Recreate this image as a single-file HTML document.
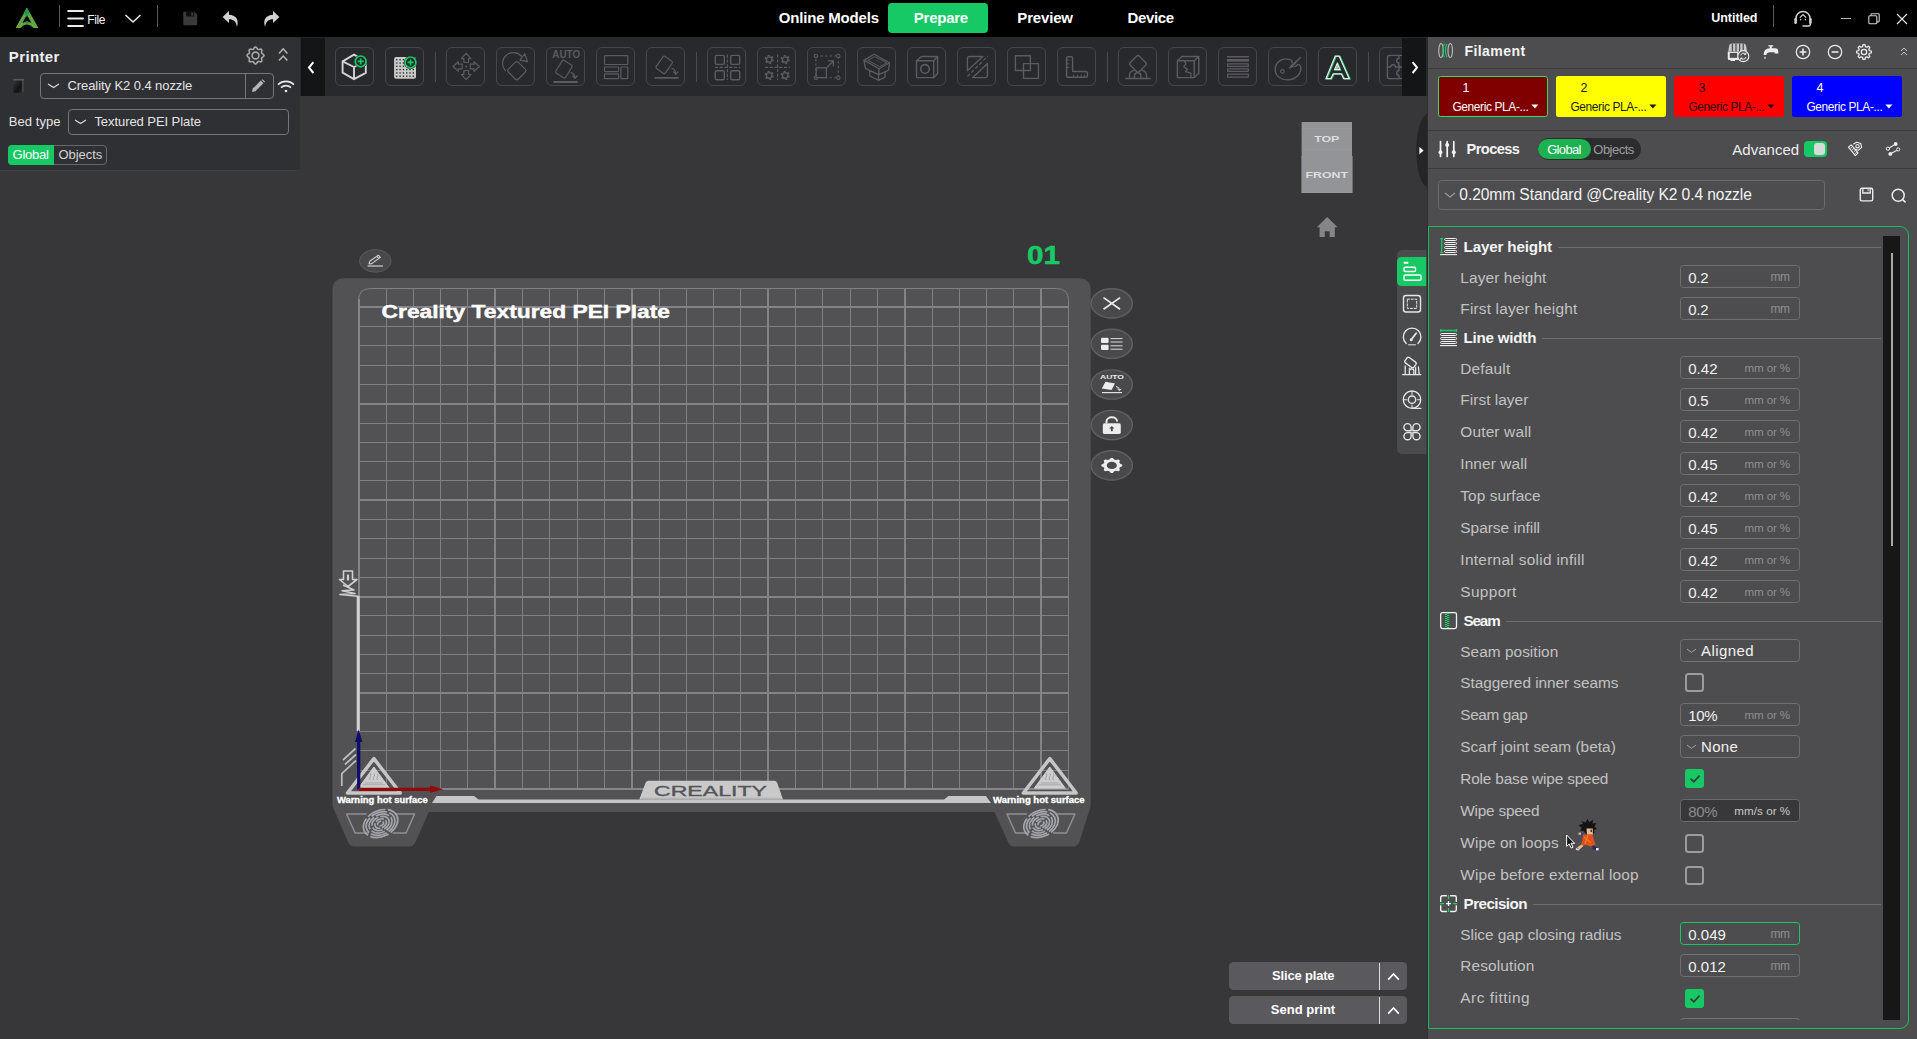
<!DOCTYPE html>
<html><head><meta charset="utf-8"><title>Creality Print</title>
<style>
html,body{margin:0;padding:0}
body{width:1917px;height:1039px;overflow:hidden;background:#373739;position:relative;font-family:"Liberation Sans",sans-serif}
.b{position:absolute;display:block}
.t{position:absolute;line-height:1;white-space:nowrap;display:block}
.tb{width:39px;height:39px;box-sizing:border-box;border:1px solid #45464b;border-radius:6px}
svg{overflow:visible}
svg text{font-family:"Liberation Sans",sans-serif}
</style></head>
<body>
<!-- viewport -->
<svg class="b" style="left:0;top:0" width="1917" height="1039" viewBox="0 0 1917 1039" font-family="Liberation Sans, sans-serif"><path d="M344.5 278.3 H1078.7 Q1090.7 278.3 1090.7 290.3 V806 L1079.5 841.5 Q1078 846.5 1072.5 846.5 H1014.5 Q1010 846.5 1008 842 L994.5 812 H428.8 L415.5 842 Q413.5 846.5 409 846.5 H354.5 Q350 846.5 348 842 L332.5 806 V290.3 Q332.5 278.3 344.5 278.3 Z" fill="#525254"/>
<path d="M386.5 288.10 V789.40 M413.5 288.10 V789.40 M440.5 288.10 V789.40 M467.5 288.10 V789.40 M522.5 288.10 V789.40 M549.5 288.10 V789.40 M577.5 288.10 V789.40 M604.5 288.10 V789.40 M659.5 288.10 V789.40 M686.5 288.10 V789.40 M713.5 288.10 V789.40 M740.5 288.10 V789.40 M795.5 288.10 V789.40 M822.5 288.10 V789.40 M850.5 288.10 V789.40 M877.5 288.10 V789.40 M932.5 288.10 V789.40 M959.5 288.10 V789.40 M986.5 288.10 V789.40 M1013.5 288.10 V789.40 M358.70 326.5 H1068.50 M358.70 345.5 H1068.50 M358.70 365.5 H1068.50 M358.70 384.5 H1068.50 M358.70 423.5 H1068.50 M358.70 442.5 H1068.50 M358.70 461.5 H1068.50 M358.70 480.5 H1068.50 M358.70 519.5 H1068.50 M358.70 538.5 H1068.50 M358.70 558.5 H1068.50 M358.70 577.5 H1068.50 M358.70 615.5 H1068.50 M358.70 635.5 H1068.50 M358.70 654.5 H1068.50 M358.70 673.5 H1068.50 M358.70 712.5 H1068.50 M358.70 731.5 H1068.50 M358.70 750.5 H1068.50 M358.70 770.5 H1068.50" stroke="#7f7f86" stroke-width="1" fill="none"/>
<path d="M495 288.10 V789.40 M632 288.10 V789.40 M768 288.10 V789.40 M905 288.10 V789.40 M1041 288.10 V789.40 M358.70 307 H1068.50 M358.70 404 H1068.50 M358.70 500 H1068.50 M358.70 597 H1068.50 M358.70 693 H1068.50" stroke="#838389" stroke-width="2" fill="none"/>
<path d="M358.50 300.50 Q358.50 288.50 370.50 288.50 H1056.50 Q1068.50 288.50 1068.50 300.50 V789.40" stroke="#7f7f86" stroke-width="1" fill="none"/>
<path d="M359 299.10 V789.40" stroke="#85858c" stroke-width="2" fill="none"/>
<path d="M358.70 789 H1068.50" stroke="#85858c" stroke-width="2" fill="none"/>
<text transform="translate(381.6,317.8) scale(1.2959,1)" font-size="17.6" font-weight="700" fill="#fff" stroke="#fff" stroke-width="0.4">Creality Textured PEI Plate</text>
<text transform="translate(1027,263.9) scale(1.1589,1)" font-size="25.6" font-weight="700" fill="#17c964" stroke="#17c964" stroke-width="0.5">01</text>
<path d="M432 803 L436.5 796 H474 L478.6 799.6 H944 L948.5 796 H986 L991 803 Z" fill="#c6c6c6"/>
<path d="M639.3 799.6 L645.5 783 Q646.3 780.8 648.6 780.8 H774.2 Q776.5 780.8 777.3 783 L783 799.6 Z" fill="#c9c9c9"/>
<path d="M641 798.3 H781" stroke="#aaa" stroke-width="0.8"/>
<text transform="translate(654,795.6) scale(1.6272,1)" font-size="14.2" fill="#55555a" stroke="#55555a" stroke-width="0.35">CREALITY</text>
<path d="M358.2 596 V731" stroke="#d2d2d2" stroke-width="3"/>
<g fill="none" stroke="#cfcfcf" stroke-width="1.6" stroke-linejoin="round"><path d="M343.5 571 H352.5 V579.5 H357 L348 586.5 L339.5 579.5 H343.5 Z"/><path d="M348 574.5 V580.5" stroke-width="2.2"/><path d="M343 585 L354 590 L342 590.8 L355 593.5 L340 594.5 L358 596.2"/></g>
<path d="M373.9 758.6 L347.5 793 H400.3 Z" fill="none" stroke="#c6c6c6" stroke-width="3.5" stroke-linejoin="round"/>
<path d="M373.9 767 L358.4 788.2 H389.4 Z" fill="#cdcdcd" stroke="#cdcdcd" stroke-width="1" stroke-linejoin="round"/>
<path d="M370.3 773.5 q1.4 1.6 0 3.2 q-1.4 1.6 0 3.4" fill="none" stroke="#96969a" stroke-width="0.8"/>
<path d="M373.9 773.5 q1.4 1.6 0 3.2 q-1.4 1.6 0 3.4" fill="none" stroke="#96969a" stroke-width="0.8"/>
<path d="M377.5 773.5 q1.4 1.6 0 3.2 q-1.4 1.6 0 3.4" fill="none" stroke="#96969a" stroke-width="0.8"/>
<path d="M364.9 783 H382.9 M362.9 784.8 H384.9" stroke="#9a9a9e" stroke-width="0.7"/>
<path d="M1049.8 758.6 L1023.4 793 H1076.2 Z" fill="none" stroke="#c6c6c6" stroke-width="3.5" stroke-linejoin="round"/>
<path d="M1049.8 767 L1034.3 788.2 H1065.3 Z" fill="#cdcdcd" stroke="#cdcdcd" stroke-width="1" stroke-linejoin="round"/>
<path d="M1046.2 773.5 q1.4 1.6 0 3.2 q-1.4 1.6 0 3.4" fill="none" stroke="#96969a" stroke-width="0.8"/>
<path d="M1049.8 773.5 q1.4 1.6 0 3.2 q-1.4 1.6 0 3.4" fill="none" stroke="#96969a" stroke-width="0.8"/>
<path d="M1053.4 773.5 q1.4 1.6 0 3.2 q-1.4 1.6 0 3.4" fill="none" stroke="#96969a" stroke-width="0.8"/>
<path d="M1040.8 783 H1058.8 M1038.8 784.8 H1060.8" stroke="#9a9a9e" stroke-width="0.7"/>
<g fill="none" stroke="#bdbdbd" stroke-width="1.7"><path d="M343 760 L355.5 748.5"/><path d="M345 764.5 L356 754.5"/><path d="M341.8 786 V773.5 L356 760.5"/></g>
<text transform="translate(336.9,802.6) scale(1.1397,1)" font-size="8.3" font-weight="700" fill="#fff" stroke="#fff" stroke-width="0.3">Warning hot surface</text>
<text transform="translate(993.0,802.6) scale(1.1485,1)" font-size="8.3" font-weight="700" fill="#fff" stroke="#fff" stroke-width="0.3">Warning hot surface</text>
<path d="M366.6 814 H346.6 L355.1 833 H368.6 M394.6 814 H414.6 L406.1 833 H392.6" fill="none" stroke="#8e8e97" stroke-width="1.5" stroke-linejoin="round"/>
<ellipse cx="380.6" cy="823.5" rx="3" ry="2.2" fill="none" stroke="#a4a4ac" stroke-width="1.7" stroke-dasharray="6 1.5" transform="rotate(-25 380.6 823.5)"/>
<ellipse cx="380.6" cy="823.5" rx="6" ry="4.4" fill="none" stroke="#a4a4ac" stroke-width="1.7" stroke-dasharray="8.6 1.7" transform="rotate(-25 380.6 823.5)"/>
<ellipse cx="380.6" cy="823.5" rx="9" ry="6.6" fill="none" stroke="#a4a4ac" stroke-width="1.7" stroke-dasharray="11.2 1.9" transform="rotate(-25 380.6 823.5)"/>
<ellipse cx="380.6" cy="823.5" rx="12" ry="8.8" fill="none" stroke="#a4a4ac" stroke-width="1.7" stroke-dasharray="13.8 2.1" transform="rotate(-25 380.6 823.5)"/>
<ellipse cx="380.6" cy="823.5" rx="15" ry="11" fill="none" stroke="#a4a4ac" stroke-width="1.7" stroke-dasharray="16.4 2.3" transform="rotate(-25 380.6 823.5)"/>
<ellipse cx="380.6" cy="823.5" rx="18" ry="13" fill="none" stroke="#a4a4ac" stroke-width="1.7" stroke-dasharray="19 2.5" transform="rotate(-25 380.6 823.5)"/>
<path d="M1027.0 814 H1007.0 L1015.5 833 H1029.0 M1055.0 814 H1075.0 L1066.5 833 H1053.0" fill="none" stroke="#8e8e97" stroke-width="1.5" stroke-linejoin="round"/>
<ellipse cx="1041.0" cy="823.5" rx="3" ry="2.2" fill="none" stroke="#a4a4ac" stroke-width="1.7" stroke-dasharray="6 1.5" transform="rotate(-25 1041.0 823.5)"/>
<ellipse cx="1041.0" cy="823.5" rx="6" ry="4.4" fill="none" stroke="#a4a4ac" stroke-width="1.7" stroke-dasharray="8.6 1.7" transform="rotate(-25 1041.0 823.5)"/>
<ellipse cx="1041.0" cy="823.5" rx="9" ry="6.6" fill="none" stroke="#a4a4ac" stroke-width="1.7" stroke-dasharray="11.2 1.9" transform="rotate(-25 1041.0 823.5)"/>
<ellipse cx="1041.0" cy="823.5" rx="12" ry="8.8" fill="none" stroke="#a4a4ac" stroke-width="1.7" stroke-dasharray="13.8 2.1" transform="rotate(-25 1041.0 823.5)"/>
<ellipse cx="1041.0" cy="823.5" rx="15" ry="11" fill="none" stroke="#a4a4ac" stroke-width="1.7" stroke-dasharray="16.4 2.3" transform="rotate(-25 1041.0 823.5)"/>
<ellipse cx="1041.0" cy="823.5" rx="18" ry="13" fill="none" stroke="#a4a4ac" stroke-width="1.7" stroke-dasharray="19 2.5" transform="rotate(-25 1041.0 823.5)"/>
<path d="M358.7 789.5 V741" stroke="#0c0c6a" stroke-width="3.2"/><path d="M358.7 729.5 L362.4 742 H355 Z" fill="#0c0c6a"/>
<path d="M358.7 789.3 H431" stroke="#8f0a0a" stroke-width="3.2"/><path d="M443.5 789.3 L430 785.6 V793 Z" fill="#8f0a0a"/>
<ellipse cx="375.3" cy="260.9" rx="15.8" ry="11.3" fill="#48484b" stroke="#5a5a5e" stroke-width="1"/>
<path d="M369 264 L369.8 261.3 L378.3 255.2 L380.4 257.3 L371.8 263.6 Z M376.8 256.3 L378.9 258.4" fill="none" stroke="#cfcfcf" stroke-width="1.1" stroke-linejoin="round"/><path d="M367.5 266 H383" stroke="#cfcfcf" stroke-width="1.2"/>
<ellipse cx="1111.8" cy="303.4" rx="20.6" ry="14.6" fill="#49494c" stroke="#606064" stroke-width="1.4"/>
<ellipse cx="1111.8" cy="343.8" rx="20.6" ry="14.6" fill="#49494c" stroke="#606064" stroke-width="1.4"/>
<ellipse cx="1111.8" cy="384.5" rx="20.6" ry="14.6" fill="#49494c" stroke="#606064" stroke-width="1.4"/>
<ellipse cx="1111.8" cy="425.0" rx="20.6" ry="14.6" fill="#49494c" stroke="#606064" stroke-width="1.4"/>
<ellipse cx="1111.8" cy="465.4" rx="20.6" ry="14.6" fill="#49494c" stroke="#606064" stroke-width="1.4"/>
<path d="M1103.5 297.6 L1120.1 309.2 M1120.1 297.6 L1103.5 309.2" stroke="#ececec" stroke-width="1.7"/>
<rect x="1101" y="337.7" width="7.6" height="5.2" rx="1" fill="#ececec"/><rect x="1101" y="344.8" width="7.6" height="5.2" rx="1" fill="#ececec"/><path d="M1110.5 338.6 H1122.5 M1110.5 342 H1122.5 M1110.5 345.8 H1122.5 M1110.5 349.2 H1122.5" stroke="#ececec" stroke-width="0.9"/>
<text transform="translate(1100,379) scale(1.522,1)" font-size="5.6" font-weight="700" fill="#ececec">AUTO</text>
<path d="M1105.5 381.8 L1115 383.5 L1111.5 390 L1101.8 388.5 Z" fill="#ececec"/><path d="M1116 386.5 q3.5 0.5 3.5 3.5 M1117.5 389 l2 1.6 l1.8 -1.6" fill="none" stroke="#ececec" stroke-width="1"/><path d="M1102 392.6 H1122" stroke="#ececec" stroke-width="1.1"/>
<rect x="1102.8" y="423.3" width="18" height="10.6" rx="1.6" fill="#ececec"/><path d="M1106.5 423 V421.5 a5.3 4.2 0 0 1 10.6 0" fill="none" stroke="#ececec" stroke-width="2"/><path d="M1111.8 426 l2.6 2.6 h-1.7 v2.6 h-1.8 v-2.6 h-1.7 z" fill="#47474a"/>
<polygon points="1110.77,457.88 1112.83,457.88 1114.27,459.54 1115.81,460.00 1118.46,459.56 1119.92,460.60 1119.30,462.52 1119.93,463.62 1122.25,464.66 1122.25,466.14 1119.93,467.18 1119.30,468.28 1119.92,470.20 1118.46,471.24 1115.81,470.80 1114.27,471.26 1112.83,472.92 1110.77,472.92 1109.33,471.26 1107.79,470.80 1105.14,471.24 1103.68,470.20 1104.30,468.28 1103.67,467.18 1101.35,466.14 1101.35,464.66 1103.67,463.62 1104.30,462.52 1103.68,460.60 1105.14,459.56 1107.79,460.00 1109.33,459.54" fill="#ececec"/><ellipse cx="1111.8" cy="465.4" rx="5" ry="3.6" fill="#49494c"/>
<rect x="1301.6" y="122" width="50.4" height="35" fill="#929497"/><rect x="1301.4" y="156" width="51.2" height="37" fill="#929497"/>
<path d="M1302 128.2 H1351.5 M1303 149.6 H1351.5 M1302 192.3 H1352" stroke="#a4a6a9" stroke-width="0.6" stroke-dasharray="1.5 1"/>
<text transform="translate(1314.2,142.4) scale(1.344,1)" font-size="9.2" font-weight="700" fill="#dedede">TOP</text>
<text transform="translate(1305.4,177.8) scale(1.345,1)" font-size="9.2" font-weight="700" fill="#dedede">FRONT</text>
<path d="M1327.2 217 L1337.6 227.2 H1334.8 V237 H1329.6 V231.3 H1324.8 V237 H1319.6 V227.2 H1316.8 Z" fill="#858588"/>
<ellipse cx="1428.5" cy="150.5" rx="12.2" ry="37" fill="#252527"/><path d="M1419.4 147 L1423.6 150.6 L1419.4 154.2 Z" fill="#fff"/>
<path d="M1426.5 250 H1403 Q1397 250 1397 256 V448 Q1397 454 1403 454 H1426.5 Z" fill="#4a4b4c"/>
<path d="M1426.2 257 H1402 Q1397 257 1397 262 V281 Q1397 286 1402 286 H1426.2 Z" fill="#17c964"/>
<g fill="none" stroke="#fff" stroke-width="1.4" stroke-linejoin="round"><path d="M1404.5 262.7 H1407.5" stroke-width="2" stroke-linecap="round"/><rect x="1404" y="267.3" width="11.5" height="4.2" rx="1.2"/><rect x="1404" y="275" width="17" height="5.2" rx="1.2"/></g>
<g fill="none" stroke="#e6e6e6" stroke-width="1.4" stroke-linejoin="round" stroke-linecap="round">
<rect x="1403.5" y="295.5" width="17" height="16.5" rx="2.5"/><rect x="1407.3" y="299.2" width="9.4" height="9.2" stroke-width="1" stroke-dasharray="2.2 1.6"/>
<path d="M1406.2 343.5 A8.8 8.8 0 1 1 1418 343.5"/><path d="M1411.3 339.5 L1416.2 333.2" stroke-width="1.8"/><circle cx="1411.2" cy="339.8" r="1.5" fill="#e6e6e6" stroke="none"/><path d="M1408.5 344.8 H1415.5" stroke-width="1"/>
<path d="M1402.6 374.6 H1420.8"/><rect x="1405" y="359.2" width="11" height="6.6" rx="1.6" transform="rotate(36 1410.5 362.5)"/><path d="M1405.2 366 V374.4 M1418.4 367 L1419.2 374.4 M1409.4 374.4 V370.6 Q1409.4 369 1411 369 H1412.2 Q1413.8 369 1413.8 370.6 V374.4 M1409.4 368.2 V369.6 M1415.6 367.6 V374.4" stroke-width="1.3"/>
<circle cx="1412" cy="399.7" r="8.7"/><circle cx="1412" cy="399.7" r="3.7"/><path d="M1412 391.6 V394.4 M1412 405 V407.8 M1403.9 399.7 H1406.7 M1417.3 399.7 H1420.1" stroke-width="1.1"/><path d="M1412 408.4 H1420.8"/>
<path d="M1411.1 430.8 h-3.6 a3.6 3.6 0 1 1 3.6 -3.6 z"/>
<path d="M1412.9 430.8 h3.6 a3.6 3.6 0 1 0 -3.6 -3.6 z"/>
<path d="M1411.1 432.6 h-3.6 a3.6 3.6 0 1 0 3.6 3.6 z"/>
<path d="M1412.9 432.6 h3.6 a3.6 3.6 0 1 1 -3.6 3.6 z"/>
</g></svg>
<div class="b" style="left:1426.6px;top:37px;width:1.4px;height:1002px;background:#2b2d30"></div>
<div class="b" style="left:1229px;top:962px;width:178.3px;height:28px;background:#5a5a5e;border-radius:4.5px"></div>
<div class="b" style="left:1379.2px;top:963px;width:1px;height:26.5px;background:#dcdcdc"></div>
<span class="t" style="left:1272.00px;top:969.10px;font-size:13px;font-weight:700;letter-spacing:-0.171px;color:#fff;">Slice plate</span>
<svg class="b" style="left:1387px;top:971.5px;" width="13" height="9"><path d="M1.2 7.6 L6.5 2 L11.8 7.6" fill="none" stroke="#fff" stroke-width="1.7"/></svg>
<div class="b" style="left:1229px;top:996px;width:178.3px;height:28px;background:#5a5a5e;border-radius:4.5px"></div>
<div class="b" style="left:1379.2px;top:997px;width:1px;height:26.5px;background:#dcdcdc"></div>
<span class="t" style="left:1270.80px;top:1003.10px;font-size:13px;font-weight:700;letter-spacing:0.014px;color:#fff;">Send print</span>
<svg class="b" style="left:1387px;top:1005.5px;" width="13" height="9"><path d="M1.2 7.6 L6.5 2 L11.8 7.6" fill="none" stroke="#fff" stroke-width="1.7"/></svg>
<!-- toolbar -->
<div class="b" style="left:300px;top:37px;width:1128px;height:59px;background:#28292d"></div>
<div class="b tb" style="left:335px;top:47px"><svg width="39" height="39" viewBox="0 0 39 39" style="position:absolute;left:-1px;top:-1px"><path d="M19 7.6 L30.8 14.4 V25.9 L19 32.2 L7.6 25.7 V14.4 Z M7.6 14.4 L19 20 L30.8 14.4 M19 20 V32.2" fill="none" stroke="#d4d4d4" stroke-width="1.9" stroke-linejoin="round" stroke-linecap="round"/><circle cx="25.7" cy="14.4" r="6.6" fill="#28292d"/><circle cx="25.7" cy="14.4" r="5.4" fill="none" stroke="#17c964" stroke-width="1.7"/><path d="M22.7 14.4 H28.7 M25.7 11.4 V17.4" stroke="#17c964" stroke-width="1.7"/></svg></div>
<div class="b tb" style="left:385px;top:47px"><svg width="39" height="39" viewBox="0 0 39 39" style="position:absolute;left:-1px;top:-1px"><rect x="9.1" y="10" width="21.9" height="21.7" rx="2" fill="#c9c9c9"/><rect x="11.15" y="12.05" width="1.3" height="1.3" fill="#1e1e20"/><rect x="11.15" y="15.35" width="1.3" height="1.3" fill="#1e1e20"/><rect x="11.15" y="18.65" width="1.3" height="1.3" fill="#1e1e20"/><rect x="11.15" y="21.95" width="1.3" height="1.3" fill="#1e1e20"/><rect x="11.15" y="25.25" width="1.3" height="1.3" fill="#1e1e20"/><rect x="11.15" y="28.55" width="1.3" height="1.3" fill="#1e1e20"/><rect x="14.45" y="12.05" width="1.3" height="1.3" fill="#1e1e20"/><rect x="14.45" y="15.35" width="1.3" height="1.3" fill="#1e1e20"/><rect x="14.45" y="18.65" width="1.3" height="1.3" fill="#1e1e20"/><rect x="14.45" y="21.95" width="1.3" height="1.3" fill="#1e1e20"/><rect x="14.45" y="25.25" width="1.3" height="1.3" fill="#1e1e20"/><rect x="14.45" y="28.55" width="1.3" height="1.3" fill="#1e1e20"/><rect x="17.75" y="12.05" width="1.3" height="1.3" fill="#1e1e20"/><rect x="17.75" y="15.35" width="1.3" height="1.3" fill="#1e1e20"/><rect x="17.75" y="18.65" width="1.3" height="1.3" fill="#1e1e20"/><rect x="17.75" y="21.95" width="1.3" height="1.3" fill="#1e1e20"/><rect x="17.75" y="25.25" width="1.3" height="1.3" fill="#1e1e20"/><rect x="17.75" y="28.55" width="1.3" height="1.3" fill="#1e1e20"/><rect x="21.05" y="12.05" width="1.3" height="1.3" fill="#1e1e20"/><rect x="21.05" y="15.35" width="1.3" height="1.3" fill="#1e1e20"/><rect x="21.05" y="18.65" width="1.3" height="1.3" fill="#1e1e20"/><rect x="21.05" y="21.95" width="1.3" height="1.3" fill="#1e1e20"/><rect x="21.05" y="25.25" width="1.3" height="1.3" fill="#1e1e20"/><rect x="21.05" y="28.55" width="1.3" height="1.3" fill="#1e1e20"/><rect x="24.35" y="12.05" width="1.3" height="1.3" fill="#1e1e20"/><rect x="24.35" y="15.35" width="1.3" height="1.3" fill="#1e1e20"/><rect x="24.35" y="18.65" width="1.3" height="1.3" fill="#1e1e20"/><rect x="24.35" y="21.95" width="1.3" height="1.3" fill="#1e1e20"/><rect x="24.35" y="25.25" width="1.3" height="1.3" fill="#1e1e20"/><rect x="24.35" y="28.55" width="1.3" height="1.3" fill="#1e1e20"/><rect x="27.65" y="12.05" width="1.3" height="1.3" fill="#1e1e20"/><rect x="27.65" y="15.35" width="1.3" height="1.3" fill="#1e1e20"/><rect x="27.65" y="18.65" width="1.3" height="1.3" fill="#1e1e20"/><rect x="27.65" y="21.95" width="1.3" height="1.3" fill="#1e1e20"/><rect x="27.65" y="25.25" width="1.3" height="1.3" fill="#1e1e20"/><rect x="27.65" y="28.55" width="1.3" height="1.3" fill="#1e1e20"/><circle cx="25.5" cy="15.4" r="6.6" fill="#28292d"/><circle cx="25.5" cy="15.4" r="5.4" fill="none" stroke="#17c964" stroke-width="1.7"/><path d="M22.5 15.4 H28.5 M25.5 12.4 V18.4" stroke="#17c964" stroke-width="1.7"/></svg></div>
<div class="b tb" style="left:446px;top:47px"><svg width="39" height="39" viewBox="0 0 39 39" style="position:absolute;left:-1px;top:-1px"><g fill="none" stroke="#5b5b61" stroke-width="1.2" stroke-linejoin="round" stroke-linecap="round"><path d="M20.2 6.3 L25 11.7 H22.5 V15.5 H17.9 V11.7 H15.4 Z"/><path d="M20.2 32.7 L25 27.3 H22.5 V23.5 H17.9 V27.3 H15.4 Z"/><path d="M7 19.5 L12.4 14.7 V17.2 H16.2 V21.8 H12.4 V24.3 Z"/><path d="M33.4 19.5 L28 14.7 V17.2 H24.2 V21.8 H28 V24.3 Z"/></g><circle cx="20.2" cy="19.5" r="1" fill="#5b5b61"/></svg></div>
<div class="b tb" style="left:496px;top:47px"><svg width="39" height="39" viewBox="0 0 39 39" style="position:absolute;left:-1px;top:-1px"><rect x="13.8" y="16.7" width="14" height="14" rx="2.2" transform="rotate(45 20.8 23.7)" fill="none" stroke="#5b5b61" stroke-width="1.2" stroke-linejoin="round" stroke-linecap="round"/><path d="M9.3 23.5 A10.8 10.8 0 0 1 25.5 9.2" fill="none" stroke="#5b5b61" stroke-width="1.2" stroke-linejoin="round" stroke-linecap="round"/><path d="M28.8 6.8 L31.5 14.7 L23.8 13.1 Z" fill="none" stroke="#5b5b61" stroke-width="1.2" stroke-linejoin="round" stroke-linecap="round"/></svg></div>
<div class="b tb" style="left:546px;top:47px"><svg width="39" height="39" viewBox="0 0 39 39" style="position:absolute;left:-1px;top:-1px"><text transform="translate(6.3,10.9) scale(0.96,1)" font-size="10.3" font-weight="700" fill="#5b5b61" font-family="Liberation Sans">AUTO</text><rect x="12.1" y="14.65" width="11.6" height="14.9" rx="1.6" transform="rotate(31.6 17.9 22.1)" fill="none" stroke="#5b5b61" stroke-width="1.2" stroke-linejoin="round" stroke-linecap="round"/><path d="M25.1 25.7 Q28.6 26.4 28.9 31 M26.7 29 L28.9 31.4 L31.1 29" fill="none" stroke="#5b5b61" stroke-width="1.2" stroke-linejoin="round" stroke-linecap="round"/><path d="M8.1 35 H31.1" fill="none" stroke="#5b5b61" stroke-width="1.8" stroke-linejoin="round" stroke-linecap="round"/></svg></div>
<div class="b tb" style="left:596px;top:47px"><svg width="39" height="39" viewBox="0 0 39 39" style="position:absolute;left:-1px;top:-1px"><rect x="8.5" y="8.7" width="23.3" height="8.8" rx="0.8" fill="none" stroke="#5b5b61" stroke-width="1.2" stroke-linejoin="round" stroke-linecap="round"/><rect x="8.5" y="20" width="14.2" height="4.6" rx="0.8" fill="none" stroke="#5b5b61" stroke-width="1.2" stroke-linejoin="round" stroke-linecap="round"/><rect x="8.5" y="26.9" width="14.2" height="4.8" rx="0.8" fill="none" stroke="#5b5b61" stroke-width="1.2" stroke-linejoin="round" stroke-linecap="round"/><rect x="24.9" y="20" width="6.9" height="11.7" rx="0.8" fill="none" stroke="#5b5b61" stroke-width="1.2" stroke-linejoin="round" stroke-linecap="round"/></svg></div>
<div class="b tb" style="left:646px;top:47px"><svg width="39" height="39" viewBox="0 0 39 39" style="position:absolute;left:-1px;top:-1px"><rect x="12.6" y="10.55" width="11.2" height="14.7" rx="1.6" transform="rotate(35.5 18.2 17.9)" fill="none" stroke="#5b5b61" stroke-width="1.2" stroke-linejoin="round" stroke-linecap="round"/><path d="M25.9 21.3 Q29.4 22 29.7 26.8 M27.5 24.9 L29.7 27.3 L31.9 24.9" fill="none" stroke="#5b5b61" stroke-width="1.2" stroke-linejoin="round" stroke-linecap="round"/><path d="M9.2 30.9 H31.9" fill="none" stroke="#5b5b61" stroke-width="1.8" stroke-linejoin="round" stroke-linecap="round"/></svg></div>
<div class="b tb" style="left:707px;top:47px"><svg width="39" height="39" viewBox="0 0 39 39" style="position:absolute;left:-1px;top:-1px"><rect x="8.3" y="8.4" width="9" height="9" rx="1.5" fill="none" stroke="#5b5b61" stroke-width="1.4" stroke-linejoin="round" stroke-linecap="round"/><rect x="23.7" y="8.4" width="9" height="9" rx="1.5" fill="none" stroke="#5b5b61" stroke-width="1.4" stroke-linejoin="round" stroke-linecap="round"/><rect x="8.3" y="23.7" width="9" height="9" rx="1.5" fill="none" stroke="#5b5b61" stroke-width="1.4" stroke-linejoin="round" stroke-linecap="round"/><rect x="23.7" y="23.7" width="9" height="9" rx="1.5" fill="none" stroke="#5b5b61" stroke-width="1.4" stroke-linejoin="round" stroke-linecap="round"/><path d="M20.4 7.6 V33 M7.8 20.4 H33" fill="none" stroke="#5b5b61" stroke-width="1.1" stroke-dasharray="3.2 1.6"/></svg></div>
<div class="b tb" style="left:757px;top:47px"><svg width="39" height="39" viewBox="0 0 39 39" style="position:absolute;left:-1px;top:-1px"><circle cx="12.2" cy="12.5" r="2.7" fill="none" stroke="#5b5b61" stroke-width="1.3" stroke-linejoin="round" stroke-linecap="round"/><circle cx="12.2" cy="12.5" r="3.9" fill="none" stroke="#5b5b61" stroke-width="1.5" stroke-dasharray="2.05 2.03"/><circle cx="28.2" cy="12.5" r="2.7" fill="none" stroke="#5b5b61" stroke-width="1.3" stroke-linejoin="round" stroke-linecap="round"/><circle cx="28.2" cy="12.5" r="3.9" fill="none" stroke="#5b5b61" stroke-width="1.5" stroke-dasharray="2.05 2.03"/><circle cx="12.2" cy="28.4" r="2.7" fill="none" stroke="#5b5b61" stroke-width="1.3" stroke-linejoin="round" stroke-linecap="round"/><circle cx="12.2" cy="28.4" r="3.9" fill="none" stroke="#5b5b61" stroke-width="1.5" stroke-dasharray="2.05 2.03"/><circle cx="28.2" cy="28.4" r="2.7" fill="none" stroke="#5b5b61" stroke-width="1.3" stroke-linejoin="round" stroke-linecap="round"/><circle cx="28.2" cy="28.4" r="3.9" fill="none" stroke="#5b5b61" stroke-width="1.5" stroke-dasharray="2.05 2.03"/><path d="M20.6 7.6 V33 M7.8 20.4 H33" fill="none" stroke="#5b5b61" stroke-width="1.1" stroke-dasharray="3.2 1.6"/></svg></div>
<div class="b tb" style="left:807px;top:47px"><svg width="39" height="39" viewBox="0 0 39 39" style="position:absolute;left:-1px;top:-1px"><rect x="8.9" y="9" width="22.4" height="21.7" fill="none" stroke="#5b5b61" stroke-width="1.1" stroke-dasharray="2.4 2.2"/><circle cx="8.9" cy="9" r="1.7" fill="#28292d" stroke="#5b5b61" stroke-width="1.1"/><circle cx="31.3" cy="9" r="1.7" fill="#28292d" stroke="#5b5b61" stroke-width="1.1"/><circle cx="8.9" cy="30.7" r="1.7" fill="#28292d" stroke="#5b5b61" stroke-width="1.1"/><circle cx="31.3" cy="30.7" r="1.7" fill="#28292d" stroke="#5b5b61" stroke-width="1.1"/><rect x="9.2" y="20.8" width="10.2" height="9.8" fill="#28292d" stroke="#5b5b61" stroke-width="1.3"/><path d="M20.6 19.7 L26.2 14.1 M21.4 13.9 H26.4 V18.9" fill="none" stroke="#5b5b61" stroke-width="1.3" stroke-linejoin="round" stroke-linecap="round"/></svg></div>
<div class="b tb" style="left:857px;top:47px"><svg width="39" height="39" viewBox="0 0 39 39" style="position:absolute;left:-1px;top:-1px"><path d="M17.2 7.3 L32.5 15.8 L22.1 21.8 L7 13.1 Z" fill="none" stroke="#5b5b61" stroke-width="1.3" stroke-linejoin="round" stroke-linecap="round"/><path d="M17.9 9.8 L29.8 15.8 L22.7 19.7 L11.2 13.4 Z" fill="none" stroke="#5b5b61" stroke-width="1" stroke-linejoin="round" stroke-linecap="round"/><path d="M19.6 13.4 L24.6 15.9" fill="none" stroke="#5b5b61" stroke-width="0.9" stroke-dasharray="1 1.2"/><path d="M7 13.1 L8.4 21.3 L21.6 27.6 L31.4 23.3 L32.5 15.8 M22.1 21.8 L21.6 27.6 M12.8 23.6 V29 L21.6 33.4 L28.1 30.1 V24.9 M21.6 27.6 V33.4" fill="none" stroke="#5b5b61" stroke-width="1.3" stroke-linejoin="round" stroke-linecap="round"/></svg></div>
<div class="b tb" style="left:907px;top:47px"><svg width="39" height="39" viewBox="0 0 39 39" style="position:absolute;left:-1px;top:-1px"><rect x="9.5" y="13.8" width="17.2" height="16.8" fill="none" stroke="#5b5b61" stroke-width="1.4" stroke-linejoin="round" stroke-linecap="round"/><path d="M9.5 13.8 L14.4 9.5 H30.6 L26.7 13.8 M30.6 9.5 V26.8 L26.7 30.6" fill="none" stroke="#5b5b61" stroke-width="1.4" stroke-linejoin="round" stroke-linecap="round"/><circle cx="18" cy="21.9" r="4.3" fill="none" stroke="#5b5b61" stroke-width="1.6" stroke-linejoin="round" stroke-linecap="round"/></svg></div>
<div class="b tb" style="left:957px;top:47px"><svg width="39" height="39" viewBox="0 0 39 39" style="position:absolute;left:-1px;top:-1px"><path d="M25.8 9.5 H12.4 Q10.4 9.5 10.4 11.5 V23.7 Z" fill="none" stroke="#5b5b61" stroke-width="1.4" stroke-linejoin="round" stroke-linecap="round"/><path d="M30.4 16.4 V28.6 Q30.4 30.6 28.4 30.6 H15.9 Z" fill="none" stroke="#5b5b61" stroke-width="1.4" stroke-linejoin="round" stroke-linecap="round"/><path d="M10.4 29.5 L30.7 9.2" fill="none" stroke="#5b5b61" stroke-width="1.3" stroke-dasharray="3.6 2"/></svg></div>
<div class="b tb" style="left:1007px;top:47px"><svg width="39" height="39" viewBox="0 0 39 39" style="position:absolute;left:-1px;top:-1px"><rect x="8.4" y="8.7" width="15" height="14.8" fill="none" stroke="#5b5b61" stroke-width="1.4" stroke-linejoin="round" stroke-linecap="round"/><rect x="16.5" y="16.6" width="14.9" height="14.8" fill="none" stroke="#5b5b61" stroke-width="1.4" stroke-linejoin="round" stroke-linecap="round"/></svg></div>
<div class="b tb" style="left:1057px;top:47px"><svg width="39" height="39" viewBox="0 0 39 39" style="position:absolute;left:-1px;top:-1px"><path d="M11 9.8 H14.2 Q15.6 9.8 15.6 11.2 V24.4 H29 Q30.4 24.4 30.4 25.8 V28.9 Q30.4 30.3 29 30.3 H11 Q9.6 30.3 9.6 28.9 V11.2 Q9.6 9.8 11 9.8 Z" fill="none" stroke="#5b5b61" stroke-width="1.5" stroke-linejoin="round" stroke-linecap="round"/><path d="M9.8 13 H12 M9.8 16.8 H12 M9.8 20.6 H12 M16.6 30 V28 M20.4 30 V28 M24.2 30 V28 M27.6 30 V28" fill="none" stroke="#5b5b61" stroke-width="0.9" stroke-linejoin="round" stroke-linecap="round"/></svg></div>
<div class="b tb" style="left:1118px;top:47px"><svg width="39" height="39" viewBox="0 0 39 39" style="position:absolute;left:-1px;top:-1px"><rect x="13.6" y="10.5" width="12.8" height="12.8" rx="2" transform="rotate(45 20 16.9)" fill="none" stroke="#5b5b61" stroke-width="1.4" stroke-linejoin="round" stroke-linecap="round"/><path d="M11.5 31.4 V28 a4.4 4.4 0 0 1 4.4 -4.4 M24.1 23.6 a4.4 4.4 0 0 1 4.4 4.4 V31.4 M16.5 31.4 V29 a3.2 3.2 0 0 1 6.4 0 V31.4" fill="none" stroke="#5b5b61" stroke-width="1.4" stroke-linejoin="round" stroke-linecap="round"/><path d="M7.7 31.5 H32.3" fill="none" stroke="#5b5b61" stroke-width="1.4" stroke-linejoin="round" stroke-linecap="round"/></svg></div>
<div class="b tb" style="left:1168px;top:47px"><svg width="39" height="39" viewBox="0 0 39 39" style="position:absolute;left:-1px;top:-1px"><path d="M9.4 13.8 H26.2 V30.6 H9.4 Z M9.4 13.8 L14.1 9.5 H30.8 L26.2 13.8 M30.8 9.5 V26.2 L26.2 30.6" fill="none" stroke="#5b5b61" stroke-width="1.4" stroke-linejoin="round" stroke-linecap="round"/><path d="M16.3 13.8 L17.9 16.9 L15.8 19.7 L19.6 22.4 L17.4 24.6 L22.9 26.2 V30.6" fill="none" stroke="#5b5b61" stroke-width="1.3" stroke-linejoin="round" stroke-linecap="round"/></svg></div>
<div class="b tb" style="left:1218px;top:47px"><svg width="39" height="39" viewBox="0 0 39 39" style="position:absolute;left:-1px;top:-1px"><rect x="9" y="9" width="21.9" height="1.5" fill="#5b5b61"/><rect x="9" y="12" width="21.9" height="2.7" fill="#5b5b61"/><rect x="9.6" y="16.9" width="20.7" height="2.5" fill="none" stroke="#5b5b61" stroke-width="1.2" stroke-linejoin="round" stroke-linecap="round"/><rect x="9.6" y="21.8" width="20.7" height="2.5" fill="none" stroke="#5b5b61" stroke-width="1.2" stroke-linejoin="round" stroke-linecap="round"/><rect x="9.6" y="27.1" width="20.7" height="3.1" fill="none" stroke="#5b5b61" stroke-width="1.2" stroke-linejoin="round" stroke-linecap="round"/></svg></div>
<div class="b tb" style="left:1268px;top:47px"><svg width="39" height="39" viewBox="0 0 39 39" style="position:absolute;left:-1px;top:-1px"><g transform="translate(1.7,1.9)"><path d="M19.5 10.5 C13 8.5 5.5 13 5.5 20.5 C5.5 27.5 12 31.8 19.5 30.8 C27 29.8 32.2 24 31 18 C30.5 15.5 28.5 15 27 16.5 C25 18.5 22.3 17.5 22.6 14.8 C22.8 13 22 11.2 19.5 10.5 Z" fill="none" stroke="#5b5b61" stroke-width="1.4" stroke-linejoin="round" stroke-linecap="round"/><circle cx="12.7" cy="22.5" r="1.8" fill="none" stroke="#5b5b61" stroke-width="1.2" stroke-linejoin="round" stroke-linecap="round"/></g><path d="M32.4 9.4 L33.6 10.6 L24.2 21 L20.2 22.6 L21.6 18.8 Z" fill="#5b5b61" stroke="#28292d" stroke-width="0.8"/></svg></div>
<div class="b tb" style="left:1318px;top:47px"><svg width="39" height="39" viewBox="0 0 39 39" style="position:absolute;left:-1px;top:-1px"><g fill="#28292d" stroke-linejoin="miter" stroke-width="1.25"><path d="M17.2 8.6 H21.2 L31.2 31 H25.6 L23.3 26.2 H15.2 L12.9 31 H8 Z M19.2 16 L16.6 22 H21.8 Z" stroke="#17c964" transform="translate(0.9,0.85)"/><path d="M17.2 8.6 H21.2 L31.2 31 H25.6 L23.3 26.2 H15.2 L12.9 31 H8 Z M19.2 16 L16.6 22 H21.8 Z" stroke="#ececec" fill="none" transform="translate(0,0.6)"/></g><path d="M19.2 18.4 L17.9 21.8 H20.6 Z" fill="#d0d0d0"/></svg></div>
<div class="b tb" style="left:1379px;top:47px"><svg width="39" height="39" viewBox="0 0 39 39" style="position:absolute;left:-1px;top:-1px"><rect x="8.4" y="8.4" width="23.2" height="23.2" rx="2.2" fill="none" stroke="#5b5b61" stroke-width="1.4" stroke-linejoin="round" stroke-linecap="round"/><path d="M8.4 20 H11.8 a2.3 2.3 0 0 1 4.6 0 H20 M20 8.4 V11.4 a2.3 2.3 0 0 0 0 4.6 V20 M20 20 V23.6 a2.3 2.3 0 0 0 0 4.6 V31.6 M20 20 H24" fill="none" stroke="#5b5b61" stroke-width="1.4" stroke-linejoin="round" stroke-linecap="round"/></svg></div>
<div class="b" style="left:435px;top:52px;width:1px;height:30px;background:#4a4a4f"></div>
<div class="b" style="left:696px;top:52px;width:1px;height:30px;background:#4a4a4f"></div>
<div class="b" style="left:1107px;top:52px;width:1px;height:30px;background:#4a4a4f"></div>
<div class="b" style="left:1368px;top:52px;width:1px;height:30px;background:#4a4a4f"></div>
<div class="b" style="left:301px;top:38px;width:24px;height:57.5px;background:#141517"></div>
<svg class="b" style="left:307px;top:61px;" width="8" height="13"><path d="M6.4 1.2 L2 6.6 L6.4 12" fill="none" stroke="#fff" stroke-width="2" stroke-linejoin="miter"/></svg>
<div class="b" style="left:1402px;top:38px;width:24px;height:57.5px;background:#141517"></div>
<svg class="b" style="left:1411px;top:61px;" width="8" height="13"><path d="M1.6 1.2 L6 6.6 L1.6 12" fill="none" stroke="#fff" stroke-width="2" stroke-linejoin="miter"/></svg>
<!-- left -->
<div class="b" style="left:0px;top:37px;width:300px;height:134px;background:#2f3034;border-bottom:1px solid #3a3e47;box-sizing:border-box"></div>
<span class="t" style="left:8.80px;top:49.10px;font-size:15px;font-weight:700;letter-spacing:0.375px;color:#f0f0f0;">Printer</span>
<svg class="b" style="left:246px;top:46px;" width="19" height="19"><path d="M9.50 1.05 L10.04 1.20 L10.54 1.59 L10.96 2.14 L11.32 2.71 L11.65 3.18 L12.01 3.45 L12.45 3.51 L13.01 3.42 L13.67 3.26 L14.35 3.17 L14.99 3.24 L15.48 3.52 L15.76 4.01 L15.83 4.65 L15.74 5.33 L15.58 5.99 L15.49 6.55 L15.55 6.99 L15.82 7.35 L16.29 7.68 L16.86 8.04 L17.41 8.46 L17.80 8.96 L17.95 9.50 L17.80 10.04 L17.41 10.54 L16.86 10.96 L16.29 11.32 L15.82 11.65 L15.55 12.01 L15.49 12.45 L15.58 13.01 L15.74 13.67 L15.83 14.35 L15.76 14.99 L15.48 15.48 L14.99 15.76 L14.35 15.83 L13.67 15.74 L13.01 15.58 L12.45 15.49 L12.01 15.55 L11.65 15.82 L11.32 16.29 L10.96 16.86 L10.54 17.41 L10.04 17.80 L9.50 17.95 L8.96 17.80 L8.46 17.41 L8.04 16.86 L7.68 16.29 L7.35 15.82 L6.99 15.55 L6.55 15.49 L5.99 15.58 L5.33 15.74 L4.65 15.83 L4.01 15.76 L3.52 15.48 L3.24 14.99 L3.17 14.35 L3.26 13.67 L3.42 13.01 L3.51 12.45 L3.45 12.01 L3.18 11.65 L2.71 11.32 L2.14 10.96 L1.59 10.54 L1.20 10.04 L1.05 9.50 L1.20 8.96 L1.59 8.46 L2.14 8.04 L2.71 7.68 L3.18 7.35 L3.45 6.99 L3.51 6.55 L3.42 5.99 L3.26 5.33 L3.17 4.65 L3.24 4.01 L3.52 3.52 L4.01 3.24 L4.65 3.17 L5.33 3.26 L5.99 3.42 L6.55 3.51 L6.99 3.45 L7.35 3.18 L7.68 2.71 L8.04 2.14 L8.46 1.59 L8.96 1.20 L9.50 1.05 Z" fill="none" stroke="#a9a9a9" stroke-width="1.6" stroke-linejoin="round"/><circle cx="9.5" cy="9.5" r="3.4" fill="none" stroke="#a9a9a9" stroke-width="1.6"/></svg>
<svg class="b" style="left:278px;top:47px;" width="11" height="15"><path d="M1 6.4 L5.2 1.8 L9.4 6.4 M1 13.6 L5.2 9 L9.4 13.6" fill="none" stroke="#b4b4b4" stroke-width="1.5"/></svg>
<svg class="b" style="left:12px;top:78px;" width="14" height="16"><defs><linearGradient id="pt" x1="0" y1="0" x2="1" y2="1"><stop offset="0" stop-color="#3a3a3c"/><stop offset="0.6" stop-color="#121214"/><stop offset="1" stop-color="#2a2a2c"/></linearGradient></defs><rect x="1.3" y="1.3" width="10.9" height="13.4" rx="0.8" fill="url(#pt)"/><rect x="9.8" y="1.6" width="2.4" height="12.8" fill="#4c4c50" opacity="0.8"/><rect x="1.6" y="1.2" width="10.4" height="1.2" fill="#75757a" opacity="0.8"/></svg>
<div class="b" style="left:40px;top:73px;width:234px;height:26px;border:1px solid #75757a;border-radius:4px;box-sizing:border-box"></div>
<div class="b" style="left:245px;top:74px;width:1px;height:24px;background:#75757a"></div>
<svg class="b" style="left:47px;top:83px;" width="13" height="6"><path d="M1 1 L6.5 4.6 L12 1" fill="none" stroke="#d8d8d8" stroke-width="1.2"/></svg>
<span class="t" style="left:67.50px;top:78.70px;font-size:13px;letter-spacing:-0.079px;color:#e4e4e4;">Creality K2 0.4 nozzle</span>
<svg class="b" style="left:251px;top:79px;" width="15" height="14"><path d="M1 13 L1.8 9.6 L9.8 1.6 L12.4 4.2 L4.4 12.2 Z" fill="#b6b6b6"/><path d="M10.6 0.9 L11.5 0.2 L14 2.6 L13.2 3.5 Z" fill="#b6b6b6"/></svg>
<svg class="b" style="left:277px;top:80px;" width="18" height="13"><path d="M1 4.6 a11.5 11.5 0 0 1 16 0" fill="none" stroke="#e8e8e8" stroke-width="1.6"/><path d="M4 7.6 a7.2 7.2 0 0 1 10 0" fill="none" stroke="#e8e8e8" stroke-width="1.6"/><circle cx="9" cy="11" r="1.3" fill="#e8e8e8"/></svg>
<span class="t" style="left:8.80px;top:115.10px;font-size:13px;letter-spacing:0.069px;color:#e4e4e4;">Bed type</span>
<div class="b" style="left:68px;top:109px;width:221px;height:26px;border:1px solid #75757a;border-radius:4px;box-sizing:border-box"></div>
<svg class="b" style="left:74px;top:118.5px;" width="13" height="6"><path d="M1 1 L6.5 4.6 L12 1" fill="none" stroke="#d8d8d8" stroke-width="1.2"/></svg>
<span class="t" style="left:94.40px;top:115.10px;font-size:13px;letter-spacing:-0.063px;color:#e4e4e4;">Textured PEI Plate</span>
<div class="b" style="left:8px;top:145px;width:99px;height:20px;border:1px solid #68686c;border-radius:4px;box-sizing:border-box"></div>
<div class="b" style="left:8px;top:145px;width:46px;height:20px;background:#17c964;border-radius:4px 0 0 4px"></div>
<span class="t" style="left:12.60px;top:147.60px;font-size:13px;letter-spacing:-0.236px;color:#fff;">Global</span>
<span class="t" style="left:58.40px;top:147.60px;font-size:13px;letter-spacing:-0.045px;color:#d4d4d4;">Objects</span>
<!-- right -->
<div class="b" style="left:1428px;top:37px;width:489px;height:1002px;background:#4d4d4f"></div>
<div class="b" style="left:1428px;top:68px;width:489px;height:1px;background:#3c3c3e"></div>
<svg class="b" style="left:1437px;top:42px;" width="17" height="17"><g fill="none" stroke-width="1.1"><ellipse cx="4" cy="8.5" rx="2.2" ry="7" stroke="#bdbdbd"/><path d="M7.6 1.8 a2.4 7 0 0 0 0 13.4" stroke="#17c964"/><path d="M10.2 1.8 a2.4 7 0 0 0 0 13.4" stroke="#17c964"/><ellipse cx="13.2" cy="8.5" rx="2.2" ry="7" stroke="#bdbdbd"/></g></svg>
<span class="t" style="left:1464.40px;top:43.95px;font-size:14px;font-weight:700;letter-spacing:0.462px;color:#f4f4f4;">Filament</span>
<svg class="b" style="left:1727px;top:42px;" width="23" height="21"><path d="M1.2 9.6 L2.2 3.6 Q2.6 1.4 4.8 1.4 H16.4 Q18.6 1.4 19 3.6 L20 9.6 Z" fill="#c9c9c9"/><path d="M5.4 1.6 V9.4 M9 1.6 V9.4 M12.6 1.6 V9.4 M16.2 1.6 V9.4" stroke="#4d4d4f" stroke-width="1.3"/><path d="M1.4 9.8 V16.4 Q1.4 17.4 2.4 17.4 H11" fill="none" stroke="#ededed" stroke-width="1.3"/><rect x="2.2" y="10.4" width="8.6" height="6" fill="none" stroke="#ededed" stroke-width="1.1"/><path d="M3.6 18.4 H8" stroke="#ededed" stroke-width="1.2"/><circle cx="16.3" cy="14.2" r="5.5" fill="#4d4d4f" stroke="#ededed" stroke-width="1.2"/><path d="M13.7 13.4 a2.8 2.8 0 0 1 4.9 -1.2 M18.9 15 a2.8 2.8 0 0 1 -4.9 1.2 M18.9 10.6 v1.8 h-1.8 M13.7 17.8 v-1.8 h1.8" fill="none" stroke="#ededed" stroke-width="1"/></svg>
<svg class="b" style="left:1763px;top:44px;" width="16" height="16"><path d="M5.4 1.2 H10.2 V2.6 H8.8 V4.2 H12 Q15.3 4.2 15.3 7.6 V9.4 H11.6 V8.2 H7 Q3.6 8.2 3.4 11 H0.6 Q0.6 4.2 6.8 4.2 V2.6 H5.4 Z" fill="#ededed"/><path d="M2 12.2 q1.6 2 0 3 q-1.6 -1 0 -3z" fill="#ededed"/></svg>
<svg class="b" style="left:1795px;top:44px;" width="16" height="16"><circle cx="8" cy="8" r="6.7" fill="none" stroke="#ededed" stroke-width="1.2"/><path d="M4.6 8 H11.4 M8 4.6 V11.4" stroke="#ededed" stroke-width="1.6"/></svg>
<svg class="b" style="left:1827px;top:44px;" width="16" height="16"><circle cx="8" cy="8" r="6.7" fill="none" stroke="#ededed" stroke-width="1.2"/><path d="M4.6 8 H11.4" stroke="#ededed" stroke-width="1.6"/></svg>
<svg class="b" style="left:1856px;top:44px;" width="16" height="16"><path d="M6.65 2.57 L7.01 0.67 L8.99 0.67 L9.35 2.57 L10.89 3.20 L12.49 2.12 L13.88 3.51 L12.80 5.11 L13.43 6.65 L15.33 7.01 L15.33 8.99 L13.43 9.35 L12.80 10.89 L13.88 12.49 L12.49 13.88 L10.89 12.80 L9.35 13.43 L8.99 15.33 L7.01 15.33 L6.65 13.43 L5.11 12.80 L3.51 13.88 L2.12 12.49 L3.20 10.89 L2.57 9.35 L0.67 8.99 L0.67 7.01 L2.57 6.65 L3.20 5.11 L2.12 3.51 L3.51 2.12 L5.11 3.20 Z" fill="none" stroke="#ededed" stroke-width="1.25" stroke-linejoin="round"/><circle cx="8" cy="8" r="2.7" fill="none" stroke="#ededed" stroke-width="1.25"/></svg>
<svg class="b" style="left:1900px;top:47px;" width="8" height="9"><path d="M1 3.8 L4 1 L7 3.8 M1 8 L4 5.2 L7 8" fill="none" stroke="#c8c8c8" stroke-width="1"/></svg>
<div class="b" style="left:1438px;top:76px;width:110px;height:41px;background:#800000;border-radius:2.5px;border:1px solid #30dd66;box-sizing:border-box;"></div>
<span class="t" style="left:1462.50px;top:82.00px;font-size:12.5px;color:#fff;">1</span>
<span class="t" style="left:1452.40px;top:102.00px;font-size:11.9px;letter-spacing:-0.354px;color:#fff;">Generic PLA-...</span>
<svg class="b" style="left:1531px;top:104.3px;" width="8" height="5"><path d="M0.4 0.4 H7.4 L3.9 4.4 Z" fill="#fff"/></svg>
<div class="b" style="left:1556px;top:76px;width:110px;height:41px;background:#ffff00;border-radius:2.5px;"></div>
<span class="t" style="left:1580.50px;top:82.00px;font-size:12.5px;color:#1a1a1a;">2</span>
<span class="t" style="left:1570.40px;top:102.00px;font-size:11.9px;letter-spacing:-0.354px;color:#1a1a1a;">Generic PLA-...</span>
<svg class="b" style="left:1649px;top:104.3px;" width="8" height="5"><path d="M0.4 0.4 H7.4 L3.9 4.4 Z" fill="#1a1a1a"/></svg>
<div class="b" style="left:1674px;top:76px;width:110px;height:41px;background:#ff0000;border-radius:2.5px;"></div>
<span class="t" style="left:1698.50px;top:82.00px;font-size:12.5px;color:#2a0000;">3</span>
<span class="t" style="left:1688.40px;top:102.00px;font-size:11.9px;letter-spacing:-0.354px;color:#2a0000;">Generic PLA-...</span>
<svg class="b" style="left:1767px;top:104.3px;" width="8" height="5"><path d="M0.4 0.4 H7.4 L3.9 4.4 Z" fill="#2a0000"/></svg>
<div class="b" style="left:1792px;top:76px;width:110px;height:41px;background:#0000ff;border-radius:2.5px;"></div>
<span class="t" style="left:1816.50px;top:82.00px;font-size:12.5px;color:#fff;">4</span>
<span class="t" style="left:1806.40px;top:102.00px;font-size:11.9px;letter-spacing:-0.354px;color:#fff;">Generic PLA-...</span>
<svg class="b" style="left:1885px;top:104.3px;" width="8" height="5"><path d="M0.4 0.4 H7.4 L3.9 4.4 Z" fill="#fff"/></svg>
<div class="b" style="left:1428px;top:130px;width:489px;height:1px;background:#3c3c3e"></div>
<svg class="b" style="left:1438px;top:140px;" width="18" height="18"><g stroke="#f4f4f4" stroke-width="1.7" stroke-linecap="round"><path d="M2.5 1.5 V16.5 M9.2 1.5 V16.5 M15.8 1.5 V16.5"/></g><circle cx="2.5" cy="12.3" r="2" fill="#f4f4f4"/><circle cx="9.2" cy="5" r="2" fill="#f4f4f4"/><circle cx="15.8" cy="12.3" r="2" fill="#f4f4f4"/><path d="M5.6 1.5 V16.5 M12.5 1.5 V16.5" stroke="#4d4d4f" stroke-width="1.6"/></svg>
<span class="t" style="left:1466.50px;top:142.00px;font-size:14.6px;font-weight:700;letter-spacing:-0.553px;color:#f4f4f4;">Process</span>
<div class="b" style="left:1537.8px;top:138.3px;width:103px;height:21.5px;background:#2c2c2e;border-radius:11px"></div>
<div class="b" style="left:1538.3px;top:138.8px;width:52.6px;height:20.5px;background:#1eb152;border-radius:10.5px"></div>
<span class="t" style="left:1547.20px;top:142.60px;font-size:13px;letter-spacing:-0.676px;color:#fff;">Global</span>
<span class="t" style="left:1593.30px;top:142.60px;font-size:13px;letter-spacing:-0.512px;color:#9c9c9e;">Objects</span>
<span class="t" style="left:1732.30px;top:141.50px;font-size:15px;letter-spacing:0.026px;color:#ebebeb;">Advanced</span>
<div class="b" style="left:1804px;top:141px;width:23.3px;height:16.2px;background:#17c964;border-radius:4px"></div>
<div class="b" style="left:1813.8px;top:143.2px;width:11.5px;height:11.7px;background:#d6dad8;border-radius:3px"></div>
<svg class="b" style="left:1847px;top:141px;" width="16" height="16"><g fill="none" stroke="#ededed" stroke-width="1.1" stroke-linejoin="round"><path d="M6.2 3.2 L9.6 1.2 L13.8 2.6 L14.6 6.4 L11.6 9.2 L8 8.2"/><circle cx="10.5" cy="5.2" r="1.7"/><path d="M1.4 6.2 L4.2 3.8 L11 11.8 L8.4 14.6 Z"/><path d="M3.4 7.4 L5.8 5.2 M5 9.2 L7.4 7 M6.6 11 L9 8.8 M8 12.8 L10.2 10.6" stroke-width="0.9"/></g></svg>
<svg class="b" style="left:1885px;top:141px;" width="16" height="16"><path d="M10.7 3 L2.9 7.7 M13.2 8.4 L5.3 12.9" stroke="#ededed" stroke-width="1.1"/><circle cx="10.7" cy="3" r="1.9" fill="#ededed"/><circle cx="5.3" cy="12.9" r="1.9" fill="#ededed"/><circle cx="2.9" cy="7.7" r="1.6" fill="#4d4d4f" stroke="#ededed" stroke-width="1"/><circle cx="13.2" cy="8.4" r="1.6" fill="#4d4d4f" stroke="#ededed" stroke-width="1"/></svg>
<div class="b" style="left:1428px;top:168px;width:489px;height:1px;background:#3c3c3e"></div>
<div class="b" style="left:1438px;top:180.3px;width:387px;height:29.5px;border:1px solid #6a6a6d;border-radius:3.5px;box-sizing:border-box"></div>
<svg class="b" style="left:1443.5px;top:191.5px;" width="12" height="7"><path d="M1 1 L6 5 L11 1" fill="none" stroke="#9a9a9c" stroke-width="1.1"/></svg>
<span class="t" style="left:1459.30px;top:187.00px;font-size:15.6px;letter-spacing:-0.085px;color:#f2f2f2;">0.20mm Standard @Creality K2 0.4 nozzle</span>
<svg class="b" style="left:1858.6px;top:187.4px;" width="15" height="15"><rect x="1.3" y="1.3" width="12.4" height="12.6" rx="1.6" fill="none" stroke="#ededed" stroke-width="1.4"/><path d="M3.8 1.4 V6 H11.2 V1.4" fill="none" stroke="#ededed" stroke-width="1.3"/><rect x="8.2" y="1.8" width="2.2" height="2.6" fill="#9a9a9a"/></svg>
<svg class="b" style="left:1890.5px;top:187.5px;" width="16" height="16"><circle cx="7.2" cy="7.2" r="6" fill="none" stroke="#ededed" stroke-width="1.5"/><path d="M11.6 11.6 L14.6 14.4" stroke="#ededed" stroke-width="1.5"/></svg>
<div class="b" style="left:1428px;top:226px;width:481px;height:803px;border:1px solid #1abf5c;border-radius:0 9px 9px 0;box-sizing:border-box"></div>
<div class="b" style="left:1883px;top:236px;width:17px;height:784px;background:#171717"></div>
<div class="b" style="left:1890.8px;top:252.5px;width:2.6px;height:293px;background:#a9a9a9"></div>
<span class="t" style="left:1463.60px;top:239.00px;font-size:15.2px;font-weight:700;letter-spacing:-0.162px;color:#f4f4f4;">Layer height</span>
<div class="b" style="left:1557.5px;top:247px;width:323.5px;height:1px;background:#6c6c6e"></div>
<svg class="b" style="left:1440px;top:238px;" width="18" height="18"><path d="M1.7 0.5 V14.5 M0.2 0.6 H3.2 M0.2 14.4 H3.2" stroke="#17c964" stroke-width="1.3" fill="none"/><rect x="4.6" y="0.5" width="12" height="2" rx="1" fill="none" stroke="#f2f2f2" stroke-width="1"/><rect x="4.6" y="4.5" width="12" height="2" rx="1" fill="none" stroke="#f2f2f2" stroke-width="1"/><rect x="4.6" y="8.5" width="12" height="2" rx="1" fill="none" stroke="#f2f2f2" stroke-width="1"/><rect x="4.6" y="12.5" width="12" height="2" rx="1" fill="none" stroke="#f2f2f2" stroke-width="1"/><path d="M0 16.6 H17" stroke="#f2f2f2" stroke-width="1.1"/></svg>
<span class="t" style="left:1463.60px;top:330.00px;font-size:15.2px;font-weight:700;letter-spacing:-0.250px;color:#f4f4f4;">Line width</span>
<div class="b" style="left:1541.8px;top:338px;width:339.2px;height:1px;background:#6c6c6e"></div>
<svg class="b" style="left:1440px;top:329px;" width="18" height="18"><path d="M0.4 1.5 H16.8 M0.7 0 V3 M16.5 0 V3" stroke="#17c964" stroke-width="1.3" fill="none"/><rect x="0.6" y="4.5" width="16" height="2" rx="1" fill="none" stroke="#f2f2f2" stroke-width="1"/><rect x="0.6" y="8.5" width="16" height="2" rx="1" fill="none" stroke="#f2f2f2" stroke-width="1"/><rect x="0.6" y="12.5" width="16" height="2" rx="1" fill="none" stroke="#f2f2f2" stroke-width="1"/><path d="M0 16.6 H17" stroke="#f2f2f2" stroke-width="1.1"/></svg>
<span class="t" style="left:1463.60px;top:613.00px;font-size:15.2px;font-weight:700;letter-spacing:-1.154px;color:#f4f4f4;">Seam</span>
<div class="b" style="left:1506px;top:621px;width:375px;height:1px;background:#6c6c6e"></div>
<svg class="b" style="left:1440px;top:612px;" width="18" height="18"><rect x="0.7" y="0.6" width="15.8" height="16" rx="1.8" fill="none" stroke="#f2f2f2" stroke-width="1.3"/><rect x="7" y="1" width="2.3" height="1" fill="#12d65e"/><rect x="7" y="3" width="2.3" height="1" fill="#12d65e"/><rect x="7" y="5" width="2.3" height="1" fill="#12d65e"/><rect x="7" y="7" width="2.3" height="1" fill="#12d65e"/><rect x="7" y="9" width="2.3" height="1" fill="#12d65e"/><rect x="7" y="11" width="2.3" height="1" fill="#12d65e"/><rect x="7" y="13" width="2.3" height="1" fill="#12d65e"/><rect x="7" y="15" width="2.3" height="1" fill="#12d65e"/><rect x="4.9" y="2" width="2.2" height="1" fill="#12d65e"/><rect x="4.9" y="4" width="2.2" height="1" fill="#12d65e"/><rect x="4.9" y="6" width="2.2" height="1" fill="#12d65e"/><rect x="4.9" y="8" width="2.2" height="1" fill="#12d65e"/><rect x="4.9" y="10" width="2.2" height="1" fill="#12d65e"/><rect x="4.9" y="12" width="2.2" height="1" fill="#12d65e"/><rect x="4.9" y="14" width="2.2" height="1" fill="#12d65e"/></svg>
<span class="t" style="left:1463.60px;top:896.00px;font-size:15.2px;font-weight:700;letter-spacing:-0.554px;color:#f4f4f4;">Precision</span>
<div class="b" style="left:1532.9px;top:904px;width:348.1px;height:1px;background:#6c6c6e"></div>
<svg class="b" style="left:1440px;top:895px;" width="18" height="18"><path d="M0.7 7 V2.4 Q0.7 0.7 2.4 0.7 H6.9 M10.1 0.7 H14.6 Q16.3 0.7 16.3 2.4 V7 M16.3 10.2 V14.8 Q16.3 16.5 14.6 16.5 H10.1 M6.9 16.5 H2.4 Q0.7 16.5 0.7 14.8 V10.2" fill="none" stroke="#f2f2f2" stroke-width="1.4"/><path d="M8.5 0 V4.1 M8.5 13 V17.1 M0 8.6 H4 M13 8.6 H17" stroke="#12d65e" stroke-width="1.3"/><path d="M8.5 6.1 V11.1 M6 8.6 H11" stroke="#f2f2f2" stroke-width="1.3"/></svg>
<span class="t" style="left:1460.30px;top:270.00px;font-size:15.4px;letter-spacing:0.122px;color:#c2c2c2;">Layer height</span>
<div class="b" style="left:1680px;top:265px;width:120px;height:23px;border:1px solid #707073;border-radius:3.5px;box-sizing:border-box"></div>
<span class="t" style="left:1688.20px;top:270.00px;font-size:15px;letter-spacing:-0.276px;color:#f2f2f2;">0.2</span>
<span class="t" style="left:1770.60px;top:271.04px;font-size:12px;letter-spacing:-0.593px;color:#8e8e90;">mm</span>
<span class="t" style="left:1460.30px;top:301.00px;font-size:15.4px;letter-spacing:0.186px;color:#c2c2c2;">First layer height</span>
<div class="b" style="left:1680px;top:297px;width:120px;height:23px;border:1px solid #707073;border-radius:3.5px;box-sizing:border-box"></div>
<span class="t" style="left:1688.20px;top:302.00px;font-size:15px;letter-spacing:-0.276px;color:#f2f2f2;">0.2</span>
<span class="t" style="left:1770.60px;top:303.04px;font-size:12px;letter-spacing:-0.593px;color:#8e8e90;">mm</span>
<span class="t" style="left:1460.30px;top:361.00px;font-size:15.4px;letter-spacing:0.184px;color:#c2c2c2;">Default</span>
<div class="b" style="left:1680px;top:356px;width:120px;height:23px;border:1px solid #707073;border-radius:3.5px;box-sizing:border-box"></div>
<span class="t" style="left:1688.20px;top:361.00px;font-size:15px;letter-spacing:0.035px;color:#f2f2f2;">0.42</span>
<span class="t" style="left:1744.40px;top:362.00px;font-size:11.6px;letter-spacing:-0.100px;color:#8e8e90;">mm or %</span>
<span class="t" style="left:1460.30px;top:392.00px;font-size:15.4px;letter-spacing:0.050px;color:#c2c2c2;">First layer</span>
<div class="b" style="left:1680px;top:388px;width:120px;height:23px;border:1px solid #707073;border-radius:3.5px;box-sizing:border-box"></div>
<span class="t" style="left:1688.20px;top:393.00px;font-size:15px;letter-spacing:-0.276px;color:#f2f2f2;">0.5</span>
<span class="t" style="left:1744.40px;top:394.00px;font-size:11.6px;letter-spacing:-0.100px;color:#8e8e90;">mm or %</span>
<span class="t" style="left:1460.30px;top:424.00px;font-size:15.4px;letter-spacing:0.175px;color:#c2c2c2;">Outer wall</span>
<div class="b" style="left:1680px;top:420px;width:120px;height:23px;border:1px solid #707073;border-radius:3.5px;box-sizing:border-box"></div>
<span class="t" style="left:1688.20px;top:425.00px;font-size:15px;letter-spacing:0.035px;color:#f2f2f2;">0.42</span>
<span class="t" style="left:1744.40px;top:426.00px;font-size:11.6px;letter-spacing:-0.100px;color:#8e8e90;">mm or %</span>
<span class="t" style="left:1460.30px;top:456.00px;font-size:15.4px;letter-spacing:0.110px;color:#c2c2c2;">Inner wall</span>
<div class="b" style="left:1680px;top:452px;width:120px;height:23px;border:1px solid #707073;border-radius:3.5px;box-sizing:border-box"></div>
<span class="t" style="left:1688.20px;top:457.00px;font-size:15px;letter-spacing:0.035px;color:#f2f2f2;">0.45</span>
<span class="t" style="left:1744.40px;top:458.00px;font-size:11.6px;letter-spacing:-0.100px;color:#8e8e90;">mm or %</span>
<span class="t" style="left:1460.30px;top:488.00px;font-size:15.4px;letter-spacing:0.079px;color:#c2c2c2;">Top surface</span>
<div class="b" style="left:1680px;top:484px;width:120px;height:23px;border:1px solid #707073;border-radius:3.5px;box-sizing:border-box"></div>
<span class="t" style="left:1688.20px;top:489.00px;font-size:15px;letter-spacing:0.035px;color:#f2f2f2;">0.42</span>
<span class="t" style="left:1744.40px;top:490.00px;font-size:11.6px;letter-spacing:-0.100px;color:#8e8e90;">mm or %</span>
<span class="t" style="left:1460.30px;top:520.00px;font-size:15.4px;letter-spacing:0.016px;color:#c2c2c2;">Sparse infill</span>
<div class="b" style="left:1680px;top:516px;width:120px;height:23px;border:1px solid #707073;border-radius:3.5px;box-sizing:border-box"></div>
<span class="t" style="left:1688.20px;top:521.00px;font-size:15px;letter-spacing:0.035px;color:#f2f2f2;">0.45</span>
<span class="t" style="left:1744.40px;top:522.00px;font-size:11.6px;letter-spacing:-0.100px;color:#8e8e90;">mm or %</span>
<span class="t" style="left:1460.30px;top:552.00px;font-size:15.4px;letter-spacing:0.304px;color:#c2c2c2;">Internal solid infill</span>
<div class="b" style="left:1680px;top:548px;width:120px;height:23px;border:1px solid #707073;border-radius:3.5px;box-sizing:border-box"></div>
<span class="t" style="left:1688.20px;top:553.00px;font-size:15px;letter-spacing:0.035px;color:#f2f2f2;">0.42</span>
<span class="t" style="left:1744.40px;top:554.00px;font-size:11.6px;letter-spacing:-0.100px;color:#8e8e90;">mm or %</span>
<span class="t" style="left:1460.30px;top:584.00px;font-size:15.4px;letter-spacing:0.360px;color:#c2c2c2;">Support</span>
<div class="b" style="left:1680px;top:580px;width:120px;height:23px;border:1px solid #707073;border-radius:3.5px;box-sizing:border-box"></div>
<span class="t" style="left:1688.20px;top:585.00px;font-size:15px;letter-spacing:0.035px;color:#f2f2f2;">0.42</span>
<span class="t" style="left:1744.40px;top:586.00px;font-size:11.6px;letter-spacing:-0.100px;color:#8e8e90;">mm or %</span>
<span class="t" style="left:1460.30px;top:644.00px;font-size:15.4px;letter-spacing:0.034px;color:#c2c2c2;">Seam position</span>
<div class="b" style="left:1680px;top:639px;width:120px;height:23px;border:1px solid #707073;border-radius:3.5px;box-sizing:border-box"></div>
<svg class="b" style="left:1686px;top:647.5px;" width="11" height="6"><path d="M1 1 L5.5 4.4 L10 1" fill="none" stroke="#a0a0a2" stroke-width="1"/></svg>
<span class="t" style="left:1701.00px;top:642.50px;font-size:15px;letter-spacing:0.410px;color:#f2f2f2;">Aligned</span>
<span class="t" style="left:1460.30px;top:675.00px;font-size:15.4px;letter-spacing:-0.047px;color:#c2c2c2;">Staggered inner seams</span>
<div class="b" style="left:1685.3px;top:673px;width:19px;height:19px;border:2px solid #9c9c9e;border-radius:3.5px;box-sizing:border-box"></div>
<span class="t" style="left:1460.30px;top:707.00px;font-size:15.4px;letter-spacing:-0.386px;color:#c2c2c2;">Seam gap</span>
<div class="b" style="left:1680px;top:703px;width:120px;height:23px;border:1px solid #707073;border-radius:3.5px;box-sizing:border-box"></div>
<span class="t" style="left:1688.20px;top:708.00px;font-size:15px;letter-spacing:-0.311px;color:#f2f2f2;">10%</span>
<span class="t" style="left:1744.40px;top:709.00px;font-size:11.6px;letter-spacing:-0.100px;color:#8e8e90;">mm or %</span>
<span class="t" style="left:1460.30px;top:739.00px;font-size:15.4px;letter-spacing:0.031px;color:#c2c2c2;">Scarf joint seam (beta)</span>
<div class="b" style="left:1680px;top:735px;width:120px;height:23px;border:1px solid #707073;border-radius:3.5px;box-sizing:border-box"></div>
<svg class="b" style="left:1686px;top:743.5px;" width="11" height="6"><path d="M1 1 L5.5 4.4 L10 1" fill="none" stroke="#a0a0a2" stroke-width="1"/></svg>
<span class="t" style="left:1701.00px;top:738.50px;font-size:15px;letter-spacing:0.313px;color:#f2f2f2;">None</span>
<span class="t" style="left:1460.30px;top:771.00px;font-size:15.4px;letter-spacing:-0.176px;color:#c2c2c2;">Role base wipe speed</span>
<div class="b" style="left:1685.3px;top:769px;width:19px;height:19px;background:#17c964;border-radius:3px"></div><svg class="b" style="left:1688.8px;top:774px;" width="12" height="10"><path d="M1.5 4.6 L4.8 7.8 L10.6 1.6" fill="none" stroke="#3a3a3c" stroke-width="1.8"/></svg>
<span class="t" style="left:1460.30px;top:803.00px;font-size:15.4px;letter-spacing:-0.236px;color:#c2c2c2;">Wipe speed</span>
<div class="b" style="left:1680px;top:799px;width:120px;height:23px;background:#38383a;border:1px solid #6a6a6d;border-radius:3.5px;box-sizing:border-box"></div>
<span class="t" style="left:1688.20px;top:804.00px;font-size:15px;letter-spacing:-0.311px;color:#8c8c8e;">80%</span>
<span class="t" style="left:1734.30px;top:805.00px;font-size:11.6px;letter-spacing:0.060px;color:#c8c8c8;">mm/s or %</span>
<span class="t" style="left:1460.30px;top:835.00px;font-size:15.4px;letter-spacing:0.067px;color:#c2c2c2;">Wipe on loops</span>
<div class="b" style="left:1685.3px;top:834px;width:19px;height:19px;border:2px solid #9c9c9e;border-radius:3.5px;box-sizing:border-box"></div>
<span class="t" style="left:1460.30px;top:867.00px;font-size:15.4px;letter-spacing:0.117px;color:#c2c2c2;">Wipe before external loop</span>
<div class="b" style="left:1685.3px;top:866px;width:19px;height:19px;border:2px solid #9c9c9e;border-radius:3.5px;box-sizing:border-box"></div>
<span class="t" style="left:1460.30px;top:927.00px;font-size:15.4px;letter-spacing:-0.026px;color:#c2c2c2;">Slice gap closing radius</span>
<div class="b" style="left:1680px;top:922px;width:120px;height:23px;border:1px solid #17c964;border-radius:3.5px;box-sizing:border-box"></div>
<span class="t" style="left:1688.20px;top:927.00px;font-size:15px;letter-spacing:0.041px;color:#f2f2f2;">0.049</span>
<span class="t" style="left:1770.60px;top:928.04px;font-size:12px;letter-spacing:-0.593px;color:#8e8e90;">mm</span>
<span class="t" style="left:1460.30px;top:958.00px;font-size:15.4px;letter-spacing:0.137px;color:#c2c2c2;">Resolution</span>
<div class="b" style="left:1680px;top:954px;width:120px;height:23px;border:1px solid #707073;border-radius:3.5px;box-sizing:border-box"></div>
<span class="t" style="left:1688.20px;top:959.00px;font-size:15px;letter-spacing:0.041px;color:#f2f2f2;">0.012</span>
<span class="t" style="left:1770.60px;top:960.04px;font-size:12px;letter-spacing:-0.593px;color:#8e8e90;">mm</span>
<span class="t" style="left:1460.30px;top:990.00px;font-size:15.4px;letter-spacing:0.521px;color:#c2c2c2;">Arc fitting</span>
<div class="b" style="left:1685.3px;top:989px;width:19px;height:19px;background:#17c964;border-radius:3px"></div><svg class="b" style="left:1688.8px;top:994px;" width="12" height="10"><path d="M1.5 4.6 L4.8 7.8 L10.6 1.6" fill="none" stroke="#3a3a3c" stroke-width="1.8"/></svg>
<div class="b" style="left:1680px;top:1018px;width:120px;height:10px;border:1px solid #707073;border-bottom:none;border-radius:3.5px 3.5px 0 0;box-sizing:border-box"></div>
<div class="b" style="left:1440px;top:1020px;width:442px;height:8px;background:#4d4d4f"></div>
<svg class="b" style="left:1564px;top:818px;" width="38" height="34"><path d="M2.6 17 V28.4 L5.2 26 L7.2 30 L9 29.2 L7.1 25.3 H10.6 Z" fill="#1a1a1a" stroke="#fff" stroke-width="1"/><path d="M14.5 7.5 L19 5.5 L17.5 3 L21.5 4.5 L23.5 0.8 L25 4.2 L29 1.8 L28.5 5.5 L32.5 5 L30.5 8.5 L33 11 L30 12 L30.5 15.5 L22 15.8 L19.5 13 L16 12.5 L18 10 Z" fill="#141414"/><path d="M22.5 10.5 H28.8 V16.8 H23 Z" fill="#e9b88f"/><rect x="26.6" y="11.6" width="1.2" height="2.4" fill="#141414"/><path d="M19 16.5 H28.5 L30 22 L31.5 26.5 L27 28.5 L22 27 L17 27.5 L18.5 22 Z" fill="#e2511b"/><path d="M20 19 L27 25 M24 17 L21 26" stroke="#f08a2c" stroke-width="1"/><rect x="16.4" y="15.8" width="2.6" height="1.8" fill="#2b45c8"/><rect x="14.6" y="14.6" width="2.4" height="2.2" fill="#e9b88f"/><path d="M13 29.5 L17.5 26.5 L19.5 28 L15.5 31.5 Z" fill="#e9b88f"/><path d="M12 30 L15.5 31.2 L15 32.6 L11.8 32 Z" fill="#d8d8e8"/><path d="M28.5 27.5 L34 30 L33.8 32.4 L28.5 31 Z" fill="#1f2a6a"/><rect x="32" y="30" width="2.6" height="2.4" fill="#e8e8f0"/></svg>
<!-- title -->
<div class="b" style="left:0px;top:0px;width:1917px;height:37px;background:#000"></div>
<svg class="b" style="left:0px;top:0px;" width="50" height="37"><defs><linearGradient id="lg" x1="0" y1="0" x2="0" y2="1"><stop offset="0" stop-color="#1d9b52"/><stop offset="0.45" stop-color="#4aa646"/><stop offset="1" stop-color="#8fae34"/></linearGradient>
<pattern id="lh" width="2.4" height="2.4" patternUnits="userSpaceOnUse" patternTransform="rotate(35)"><rect width="2.4" height="2.4" fill="url(#lg)"/><rect width="0.8" height="2.4" fill="#d9a024" opacity="0.75"/></pattern></defs>
<path d="M26.9 7.7 L38.3 28 L34.3 28 L26.9 14.4 L19.6 28 L15.8 28 Z" fill="#35a24c"/>
<path d="M26.9 7.7 L38.3 28 L34.3 28 L26.9 14.4 L19.6 28 L15.8 28 Z" fill="url(#lh)" opacity="0.8"/>
<path d="M26.9 7.7 L29.6 12.6 L26.9 17.4 L24.2 12.6 Z" fill="#1d9b52"/>
<path d="M17.2 28 Q26.9 15.6 36.8 28 L33.6 28 Q26.9 20.6 20.4 28 Z" fill="#3faa4c"/>
<path d="M17.2 28 Q26.9 15.6 36.8 28 L33.6 28 Q26.9 20.6 20.4 28 Z" fill="url(#lh)" opacity="0.7"/>
<circle cx="26.9" cy="22.3" r="1.5" fill="#1d8f4c"/></svg>
<div class="b" style="left:59px;top:5px;width:1px;height:22px;background:#5a5a5a"></div>
<svg class="b" style="left:66px;top:9px;" width="20" height="19"><path d="M2.2 2.1 H16.9 M2.2 9.5 H16.9 M2.2 17 H16.9" stroke="#ebebeb" stroke-width="2" stroke-linecap="round"/></svg>
<span class="t" style="left:87.30px;top:13.64px;font-size:12px;letter-spacing:-0.379px;color:#f6f6f6;">File</span>
<svg class="b" style="left:124px;top:13px;" width="18" height="11"><path d="M1.5 2 L9 9 L16.5 2" fill="none" stroke="#e6e6e6" stroke-width="1.6"/></svg>
<div class="b" style="left:157px;top:5px;width:1px;height:22px;background:#5a5a5a"></div>
<svg class="b" style="left:183px;top:11px;" width="15" height="15"><path d="M1.5 0.8 H11.5 L14.2 3.5 V13 a1.2 1.2 0 0 1 -1.2 1.2 H1.5 a1.2 1.2 0 0 1 -1.2 -1.2 V2 a1.2 1.2 0 0 1 1.2 -1.2 Z" fill="#3a3a3c"/><rect x="3.2" y="0.8" width="8" height="4.6" fill="#0e0e0e"/><rect x="8.2" y="1.4" width="2" height="3.2" fill="#3a3a3c"/></svg>
<svg class="b" style="left:222px;top:10px;" width="18" height="18"><path d="M7 1 L0.6 7 L7 13 V9.2 C11.5 9.2 14.2 11.2 15 17 C17.4 9.5 13.5 5 7 4.8 Z" fill="#d2d2d2"/></svg>
<svg class="b" style="left:262px;top:10px;" width="18" height="18"><g transform="translate(18,0) scale(-1,1)"><path d="M7 1 L0.6 7 L7 13 V9.2 C11.5 9.2 14.2 11.2 15 17 C17.4 9.5 13.5 5 7 4.8 Z" fill="#d2d2d2"/></g></svg>
<span class="t" style="left:778.80px;top:9.80px;font-size:15px;font-weight:700;letter-spacing:-0.193px;color:#fff;">Online Models</span>
<div class="b" style="left:888px;top:3px;width:100px;height:30px;background:#17c964;border-radius:4px"></div>
<span class="t" style="left:913.80px;top:9.80px;font-size:15px;font-weight:700;letter-spacing:-0.245px;color:#fff;">Prepare</span>
<span class="t" style="left:1017.30px;top:9.80px;font-size:15px;font-weight:700;letter-spacing:-0.167px;color:#fff;">Preview</span>
<span class="t" style="left:1127.50px;top:9.80px;font-size:15px;font-weight:700;letter-spacing:-0.334px;color:#fff;">Device</span>
<span class="t" style="left:1711.30px;top:12.00px;font-size:12.5px;font-weight:700;letter-spacing:-0.046px;color:#fff;">Untitled</span>
<div class="b" style="left:1773px;top:5px;width:1px;height:22px;background:#5a5a5a"></div>
<svg class="b" style="left:1793px;top:9px;" width="20" height="18"><path d="M3 12 V9.5 a7 7 0 0 1 14 0 V12" fill="none" stroke="#cfcfcf" stroke-width="1.5"/><rect x="1.3" y="9" width="2.6" height="6" rx="1.2" fill="#cfcfcf"/><rect x="16.1" y="9" width="2.6" height="6" rx="1.2" fill="#cfcfcf"/><path d="M17.3 14.5 V15.5 a1.5 1.5 0 0 1 -1.5 1.5 H9.5" fill="none" stroke="#cfcfcf" stroke-width="1.4"/><path d="M6.8 8.6 L10 5.6 L13.2 8.6" fill="none" stroke="#cfcfcf" stroke-width="1.3"/><circle cx="7.6" cy="10.6" r="0.8" fill="#cfcfcf"/><circle cx="12.4" cy="10.6" r="0.8" fill="#cfcfcf"/></svg>
<div class="b" style="left:1840.5px;top:18.3px;width:10.5px;height:1.2px;background:#b4b4b4"></div>
<svg class="b" style="left:1868px;top:13px;" width="12" height="12"><rect x="0.8" y="2.8" width="8" height="8" rx="1" fill="none" stroke="#d0d0d0" stroke-width="1.1"/><path d="M3 2.8 V1.6 a0.9 0.9 0 0 1 0.9 -0.9 H10.3 a0.9 0.9 0 0 1 0.9 0.9 V8 a0.9 0.9 0 0 1 -0.9 0.9 H8.8" fill="none" stroke="#d0d0d0" stroke-width="1.1"/></svg>
<svg class="b" style="left:1896px;top:13px;" width="12" height="12"><path d="M1 1 L11 11 M11 1 L1 11" stroke="#e0e0e0" stroke-width="1.2"/></svg>
</body></html>
